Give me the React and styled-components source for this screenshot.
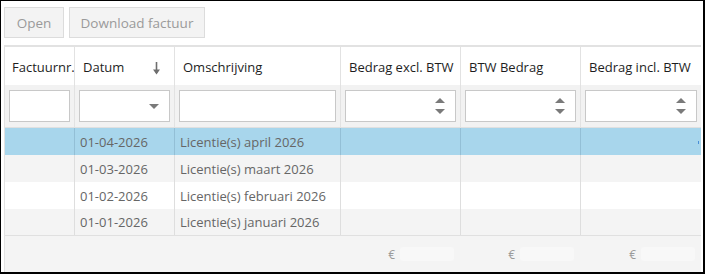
import React from 'react';
import styled, { createGlobalStyle } from 'styled-components';

const GlobalStyle = createGlobalStyle`
  body {
    margin: 0;
    background: #fff;
    font-family: "Open Sans", "Liberation Sans", sans-serif;
  }
  * { box-sizing: border-box; }
`;

const Frame = styled.div`
  width: 705px;
  height: 274px;
  border-style: solid;
  border-color: #000;
  border-width: 1px 2px 2px 1px;
  background: #fff;
  padding: 6px 0 0 3px;
  overflow: hidden;
`;

const Toolbar = styled.div`
  display: flex;
  gap: 5px;
  margin-bottom: 7px;
`;

const Button = styled.button`
  height: 31px;
  width: ${(p) => p.$w}px;
  background: #f3f3f3;
  border: 1px solid #dcdcdc;
  color: #9a9a9a;
  font-family: inherit;
  font-size: 13.5px;
  padding: 0;
`;

const Grid = styled.div`
  width: 697px;
  border-top: 2px solid #e2e2e2;
  border-left: 1px solid #e2e2e2;
`;

const cols = '70px 100px 166px 120px 120px 120px';

const Row = styled.div`
  display: grid;
  grid-template-columns: ${cols};
  height: ${(p) => p.$h}px;
  background: ${(p) => p.$bg};
  border-bottom: ${(p) => (p.$line ? '1px solid #e0e0e0' : 'none')};
`;

const Cell = styled.div`
  display: flex;
  align-items: center;
  padding: 0 ${(p) => p.$pad ?? 5}px;
  border-right: 1px solid ${(p) => p.$lc || '#e2e2e2'};
  font-size: 13px;
  color: ${(p) => p.$color || '#666'};
  white-space: nowrap;
  overflow: hidden;
  justify-content: ${(p) => p.$justify || 'flex-start'};
  gap: ${(p) => p.$gap ?? 0}px;
  &:last-child { border-right: none; }
`;

const HeadCell = styled(Cell)`
  color: #1e1e1e;
  justify-content: space-between;
  padding-top: 2px;
`;

const SortArrow = () => (
  <svg width="9" height="13" viewBox="0 0 9 13" style={{ marginRight: 5, marginTop: 2 }}>
    <path d="M4.5 0 V11" stroke="#6e6e6e" strokeWidth="1.6" />
    <path d="M1 7.5 L4.5 12.5 L8 7.5 Z" fill="#6e6e6e" />
  </svg>
);

const FilterBox = styled.div`
  flex: 1;
  height: 32px;
  background: #fff;
  border: 1px solid #c8c8c8;
  display: flex;
  align-items: center;
  justify-content: flex-end;
  padding-right: 10px;
`;

const Spin = styled.div`
  display: flex;
  flex-direction: column;
  gap: 6px;
`;

const Caret = ({ up }) => (
  <svg width="10" height="5" viewBox="0 0 10 5">
    <path d={up ? 'M0 5 L5 0 L10 5 Z' : 'M0 0 L5 5 L10 0 Z'} fill="#7a7a7a" />
  </svg>
);

const Euro = styled.span`
  color: #9a9a9a;
  font-size: 12px;
`;

const FaintBox = styled.span`
  width: 54px;
  height: 14px;
  background: #f8f8f8;
  border-radius: 3px;
`;

const Marker = styled.span`
  width: 1px;
  height: 3px;
  background: #4a8fd8;
  margin-left: auto;
  margin-right: -3px;
  margin-top: 2px;
`;

const headers = [
  'Factuurnr.',
  'Datum',
  'Omschrijving',
  'Bedrag excl. BTW',
  'BTW Bedrag',
  'Bedrag incl. BTW',
];

const filters = ['text', 'select', 'text', 'num', 'num', 'num'];

const rows = [
  { datum: '01-04-2026', oms: 'Licentie(s) april 2026', selected: true },
  { datum: '01-03-2026', oms: 'Licentie(s) maart 2026' },
  { datum: '01-02-2026', oms: 'Licentie(s) februari 2026' },
  { datum: '01-01-2026', oms: 'Licentie(s) januari 2026' },
];

export default function App() {
  return (
    <>
      <GlobalStyle />
      <Frame>
        <Toolbar>
          <Button $w={60}>Open</Button>
          <Button $w={136}>Download factuur</Button>
        </Toolbar>
        <Grid>
          <Row $h={38} $bg="#fff">
            {headers.map((h) => (
              <HeadCell key={h} $pad={h === 'Factuurnr.' ? 7 : 8}>
                <span>{h}</span>
                {h === 'Datum' && <SortArrow />}
              </HeadCell>
            ))}
          </Row>
          <Row $h={43} $bg="#f2f2f2" $line>
            {filters.map((f, i) => (
              <Cell key={i} $pad={4}>
                <FilterBox>
                  {f === 'select' && <Caret />}
                  {f === 'num' && (
                    <Spin>
                      <Caret up />
                      <Caret />
                    </Spin>
                  )}
                </FilterBox>
              </Cell>
            ))}
          </Row>
          {rows.map((r, i) => {
            const bg = r.selected ? '#a8d6ec' : i % 2 === 1 ? '#f4f4f4' : '#fff';
            const lc = r.selected ? '#93bfd6' : '#dedede';
            return (
              <Row key={r.datum} $h={27} $bg={bg} $line={i === rows.length - 1}>
                <Cell $lc={lc} />
                <Cell $lc={lc}>{r.datum}</Cell>
                <Cell $lc={lc}>{r.oms}</Cell>
                <Cell $lc={lc} />
                <Cell $lc={lc} />
                <Cell $lc={lc}>{r.selected && <Marker />}</Cell>
              </Row>
            );
          })}
          <Row $h={36} $bg="#f4f4f4">
            <Cell $lc="transparent" />
            <Cell $lc="transparent" />
            <Cell $lc="transparent" />
            {[0, 1, 2].map((k) => (
              <Cell key={k} $lc="transparent" $justify="flex-end" $pad={6} $gap={5}>
                <Euro>€</Euro>
                <FaintBox />
              </Cell>
            ))}
          </Row>
        </Grid>
      </Frame>
    </>
  );
}
